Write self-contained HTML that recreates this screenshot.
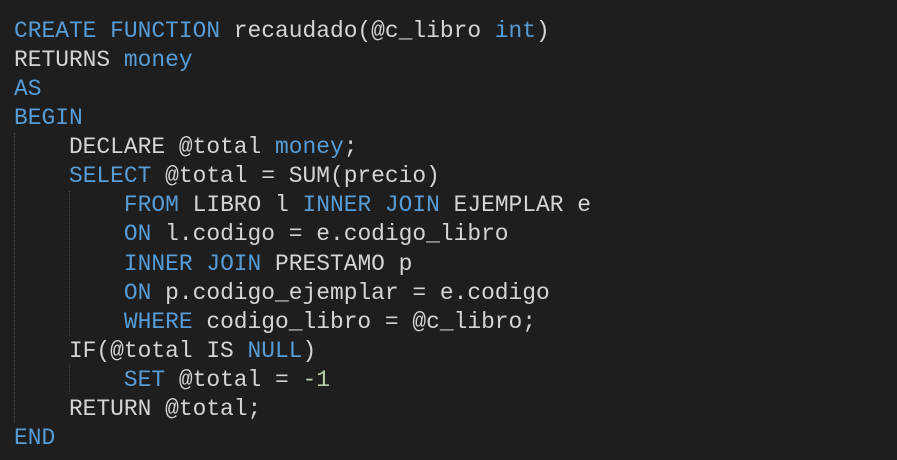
<!DOCTYPE html>
<html><head><style>
html,body{margin:0;padding:0;background:#1e1e1e;width:897px;height:460px;overflow:hidden}
pre{position:absolute;left:14px;top:17px;margin:0;font-family:"Liberation Mono",monospace;font-size:22.9px;line-height:29.07px;color:#d4d4d4;white-space:pre}
.k{color:#569cd6}.n{color:#b5cea8}
.g{position:absolute;width:0;border-left:1px dotted #4a4a4a}
</style></head><body>
<div class="g" style="left:14px;top:133px;height:290px"></div>
<div class="g" style="left:69px;top:191px;height:145px"></div>
<div class="g" style="left:69px;top:365px;height:29px"></div>
<pre><span class="k">CREATE FUNCTION</span> recaudado(@c_libro <span class="k">int</span>)
RETURNS <span class="k">money</span>
<span class="k">AS</span>
<span class="k">BEGIN</span>
    DECLARE @total <span class="k">money</span>;
    <span class="k">SELECT</span> @total = SUM(precio)
        <span class="k">FROM</span> LIBRO l <span class="k">INNER JOIN</span> EJEMPLAR e
        <span class="k">ON</span> l.codigo = e.codigo_libro
        <span class="k">INNER JOIN</span> PRESTAMO p
        <span class="k">ON</span> p.codigo_ejemplar = e.codigo
        <span class="k">WHERE</span> codigo_libro = @c_libro;
    IF(@total IS <span class="k">NULL</span>)
        <span class="k">SET</span> @total = <span class="n">-1</span>
    RETURN @total;
<span class="k">END</span></pre>
</body></html>
